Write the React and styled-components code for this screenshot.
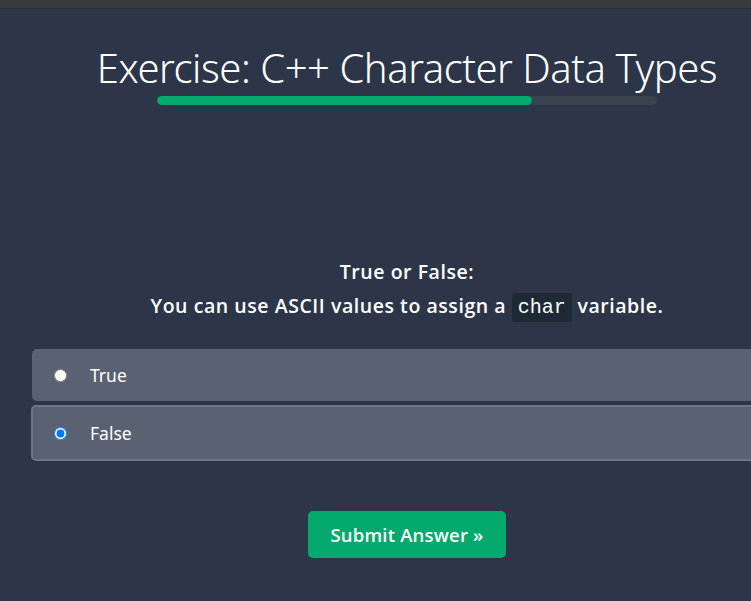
import React, { useState } from "react";
import styled, { createGlobalStyle } from "styled-components";

const GlobalStyle = createGlobalStyle`
  html, body {
    margin: 0;
    padding: 0;
    background: #2d3648;
    overflow: hidden;
  }
  body {
    font-family: "Open Sans", "Liberation Sans", sans-serif;
    color: #fff;
  }
`;

const TopBar = styled.div`
  height: 8px;
  background: #3a3a3e;
  border-bottom: 1px solid #2a2f3a;
`;

const Page = styled.main`
  width: 750px;
  margin-left: 32px;
  display: flex;
  flex-direction: column;
  align-items: center;
`;

const Title = styled.h1`
  margin: 36px 0 0 0;
  font-family: "Noto Sans", "Open Sans", sans-serif;
  font-weight: 300;
  font-size: 40px;
  line-height: 46px;
  letter-spacing: -0.45px;
  white-space: nowrap;
  color: #fff;
`;

const Track = styled.div`
  width: 500px;
  height: 9px;
  margin-top: 5px;
  border-radius: 5px;
  background: #38444d;
  overflow: hidden;
`;

const Fill = styled.div`
  height: 100%;
  border-radius: 5px;
  background: #04aa6d;
`;

const Question = styled.div`
  margin-top: 150px;
  text-align: center;
  font-family: "Open Sans", "Noto Sans", sans-serif;
  font-weight: 600;
  font-size: 19.5px;
  letter-spacing: 0.55px;
  line-height: 34px;
  white-space: nowrap;
  color: #fff;
`;

const Code = styled.code`
  font-family: "Liberation Mono", "DejaVu Sans Mono", monospace;
  font-weight: 400;
  font-size: 20px;
  letter-spacing: 0;
  background: #1d2a35;
  border-radius: 3px;
  padding: 3px 6px;
`;

const Options = styled.div`
  width: 100%;
  margin-top: 24px;
  display: flex;
  flex-direction: column;
  gap: 4px;
`;

const Option = styled.label`
  display: flex;
  align-items: center;
  gap: 23px;
  box-sizing: border-box;
  height: ${(p) => (p.$checked ? "56px" : "52px")};
  padding-left: ${(p) => (p.$checked ? "21px" : "22px")};
  background: #5a6170;
  border-radius: 5px;
  border: ${(p) => (p.$checked ? "2px solid #6e7585" : "none")};
  margin-left: ${(p) => (p.$checked ? "-1px" : "0")};
  font-family: "Noto Sans", "Open Sans", sans-serif;
  font-size: 17.5px;
  color: #fff;
  cursor: pointer;

  input {
    margin: 0;
    width: 13px;
    height: 13px;
    accent-color: #0075ff;
  }
`;

const Submit = styled.button`
  margin-top: 50px;
  width: 198px;
  height: 47px;
  border: none;
  border-radius: 5px;
  background: #04aa6d;
  color: #fff;
  font-family: "Open Sans", "Noto Sans", sans-serif;
  font-weight: 600;
  font-size: 18.5px;
  letter-spacing: 0.2px;
  cursor: pointer;
`;

export default function App() {
  const [answer, setAnswer] = useState("False");
  const choices = ["True", "False"];

  return (
    <>
      <GlobalStyle />
      <TopBar />
      <Page>
        <Title>Exercise: C++ Character Data Types</Title>
        <Track>
          <Fill style={{ width: "75%" }} />
        </Track>
        <Question>
          True or False:
          <br />
          You can use ASCII values to assign a <Code>char</Code> variable.
        </Question>
        <Options>
          {choices.map((c) => (
            <Option key={c} $checked={answer === c}>
              <input
                type="radio"
                name="quiz"
                checked={answer === c}
                onChange={() => setAnswer(c)}
              />
              {c}
            </Option>
          ))}
        </Options>
        <Submit>Submit Answer »</Submit>
      </Page>
    </>
  );
}
